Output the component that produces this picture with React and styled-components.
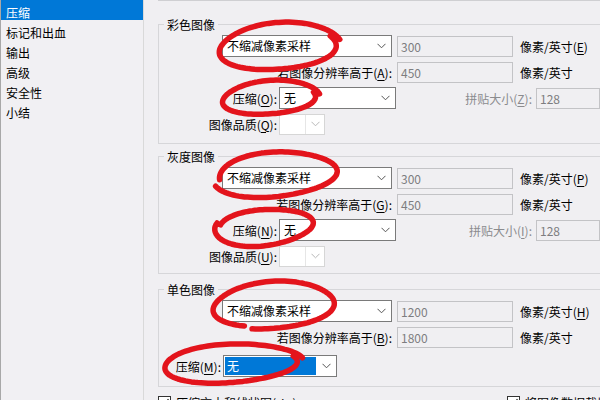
import React from 'react';
import styled, { createGlobalStyle } from 'styled-components';

const Global = createGlobalStyle`
  html, body { margin: 0; padding: 0; }
  body {
    width: 600px; height: 400px; overflow: hidden;
    background: #f0eff2;
    font-family: "Noto Sans CJK SC", "Microsoft YaHei", sans-serif;
    font-size: 12px; color: #000;
  }
  u { text-decoration-thickness: 1px; text-underline-offset: 2px; }
`;

const Page = styled.div`
  position: relative;
  display: flex;
  width: 600px;
  height: 400px;
  overflow: hidden;
  background: #f0eff2;
`;

const Sidebar = styled.ul`
  list-style: none;
  margin: 0;
  padding: 0;
  width: 142px;
  flex: none;
  border-left: 1px solid #a8a8a8;
  border-right: 1px solid #d9d9d9;
  background: #f1f0f3;
`;

const NavItem = styled.li`
  box-sizing: border-box;
  height: 20px;
  padding: 4px 0 0 5px;
  line-height: 17px;
  white-space: nowrap;
  background: ${p => (p.$active ? '#0078d7' : 'transparent')};
  color: ${p => (p.$active ? '#fff' : '#000')};
`;

const Main = styled.div`
  flex: 1;
  display: flex;
  flex-direction: column;
  padding-left: 14px;
  min-width: 0;
`;

const Content = styled.div`
  display: flex;
  flex-direction: column;
  border-top: 1px solid #cfcfd2;
`;

const Group = styled.section`
  display: flex;
  flex-direction: column;
  margin-top: ${p => p.$mt}px;
  padding-bottom: ${p => p.$pb}px;
  border: 1px solid #d6d6d9;
  border-right: none;
`;

const Legend = styled.div`
  width: fit-content;
  height: 16px;
  line-height: 16px;
  margin: -8px 0 2px 5px;
  padding: 0 3px;
  background: #f0eff2;
  white-space: nowrap;
`;

const Rows = styled.div`
  display: flex;
  flex-direction: column;
  gap: 4px;
`;

const Row = styled.div`
  display: flex;
  align-items: center;
  height: 22px;
  margin-top: ${p => p.$mt || 0}px;
`;

const Label = styled.span`
  flex: none;
  width: ${p => p.$w}px;
  margin-right: ${p => p.$mr || 0}px;
  text-align: right;
  white-space: nowrap;
  color: ${p => (p.$muted ? '#8b8b8e' : '#000')};
`;

const Unit = styled.span`
  flex: none;
  margin-left: 7px;
  white-space: nowrap;
`;

const ComboBox = styled.div`
  box-sizing: border-box;
  flex: none;
  width: ${p => p.$w}px;
  height: 22px;
  display: flex;
  align-items: center;
  background: #fff;
  border: 1px solid #7a7a7a;
  padding: 0 5px 0 ${p => (p.$selected ? 1 : 4)}px;
  margin-right: ${p => p.$mr || 0}px;
`;

const ComboText = styled.span`
  flex: 1;
  white-space: nowrap;
  overflow: hidden;
  line-height: 16px;
`;

const ComboHighlight = styled.span`
  flex: 1;
  height: 18px;
  line-height: 18px;
  padding-left: 2px;
  background: #0078d7;
  color: #fff;
  margin-right: 6px;
`;

const DimCombo = styled.div`
  box-sizing: border-box;
  flex: none;
  width: ${p => p.$w}px;
  height: 21px;
  display: flex;
  background: #fff;
  border: 1px solid #d6d6d6;
`;

const DimPart = styled.span`
  flex: 1;
  border-right: 1px solid #e6e6e6;
`;

const DimArrow = styled.span`
  width: 18px;
  display: flex;
  align-items: center;
  justify-content: center;
`;

const Field = styled.div`
  box-sizing: border-box;
  flex: none;
  width: ${p => p.$w}px;
  height: 21px;
  display: flex;
  align-items: center;
  padding-left: 3px;
  border: 1px solid #c3c3c6;
  color: #7d7d80;
  background: #f0eff2;
`;

const CheckRow = styled.div`
  display: flex;
  align-items: center;
  margin-top: 7px;
`;

const CheckItem = styled.label`
  display: flex;
  align-items: center;
  gap: 5px;
  flex: none;
  width: ${p => p.$w ? `${p.$w}px` : 'auto'};
  white-space: nowrap;
`;

const Box = styled.span`
  box-sizing: border-box;
  width: 13px;
  height: 13px;
  border: 1px solid #333;
  background: #fff;
  display: flex;
  align-items: center;
  justify-content: center;
`;

const Overlay = styled.svg`
  position: absolute;
  left: 0;
  top: 0;
  pointer-events: none;
`;

const Chevron = ({ color = '#555' }) => (
  <svg width="9" height="6" viewBox="0 0 9 6" style={{ flex: 'none' }}>
    <path d="M0.5 0.8 L4.5 4.8 L8.5 0.8" fill="none" stroke={color} strokeWidth="1" />
  </svg>
);

const Check = () => (
  <svg width="11" height="11" viewBox="0 0 11 11">
    <path d="M1.5 5.5 L4.2 8.3 L9.5 2.2" fill="none" stroke="#222" strokeWidth="1.3" />
  </svg>
);

function loopPath({ cx, cy, rx, ry, rot = 0, start = 0, sweep = 370, s0 = 0.96, s1 = 1.06, wob = 0.03, phase = 0 }) {
  const n = 120;
  const r = (rot * Math.PI) / 180;
  const pts = [];
  for (let i = 0; i <= n; i++) {
    const t = i / n;
    const a = ((start + sweep * t) * Math.PI) / 180;
    const s = (s0 + (s1 - s0) * t) * (1 + wob * Math.sin(3 * a + phase));
    const x = rx * s * Math.cos(a);
    const y = ry * s * Math.sin(a);
    const X = cx + x * Math.cos(r) - y * Math.sin(r);
    const Y = cy + x * Math.sin(r) + y * Math.cos(r);
    pts.push(`${X.toFixed(1)} ${Y.toFixed(1)}`);
  }
  return 'M' + pts.join(' L');
}

const loops = [
  { cx: 279, cy: 47, rx: 59, ry: 23, rot: -4, start: -20, sweep: 372 },
  { cx: 270, cy: 98, rx: 47, ry: 16.5, rot: -4, start: -10, sweep: 368 },
  { cx: 275, cy: 174, rx: 57, ry: 21, rot: -4, start: 175, sweep: 345, s0: 1.0, s1: 1.12, phase: 1 },
  { cx: 264, cy: 227, rx: 48, ry: 18, rot: -5, start: 200, sweep: 365, phase: 2 },
  { cx: 272, cy: 305, rx: 58, ry: 22, rot: -4, start: 120, sweep: 350, s0: 1.0, s1: 1.1 },
  { cx: 231, cy: 364, rx: 67, ry: 19, rot: -3, start: -15, sweep: 368, phase: 1 },
];

const navItems = ['压缩', '标记和出血', '输出', '高级', '安全性', '小结'];

const groups = [
  { title: '彩色图像', mt: 23, pb: 8, m: ['E', 'A', 'O', 'Z', 'Q'], res: ['300', '450'], quality: true },
  { title: '灰度图像', mt: 12, pb: 6, m: ['P', 'G', 'N', 'I', 'U'], res: ['300', '450'], quality: true },
  { title: '单色图像', mt: 15, pb: 9, m: ['H', 'B', 'M'], res: ['1200', '1800'], quality: false },
];

function ImageGroup({ g }) {
  return (
    <Group $mt={g.mt} $pb={g.pb}>
      <Legend>{g.title}</Legend>
      <Rows>
        <Row>
          <Label $w={63} />
          <ComboBox $w={170} $mr={5}>
            <ComboText>不缩减像素采样</ComboText>
            <Chevron />
          </ComboBox>
          <Field $w={116}>{g.res[0]}</Field>
          <Unit>像素/英寸(<u>{g.m[0]}</u>)</Unit>
        </Row>
        <Row>
          <Label $w={233} $mr={5}>若图像分辨率高于(<u>{g.m[1]}</u>):</Label>
          <Field $w={116}>{g.res[1]}</Field>
          <Unit>像素/英寸</Unit>
        </Row>
        {g.quality ? (
          <>
            <Row>
              <Label $w={118} $mr={2}>压缩(<u>{g.m[2]}</u>):</Label>
              <ComboBox $w={117}>
                <ComboText>无</ComboText>
                <Chevron />
              </ComboBox>
              <Label $w={136} $mr={4} $muted>拼贴大小(<u>{g.m[3]}</u>):</Label>
              <Field $w={64}>128</Field>
            </Row>
            <Row>
              <Label $w={118} $mr={2}>图像品质(<u>{g.m[4]}</u>):</Label>
              <DimCombo $w={46}>
                <DimPart />
                <DimArrow><Chevron color="#b8b8b8" /></DimArrow>
              </DimCombo>
            </Row>
          </>
        ) : (
          <Row $mt={3}>
            <Label $w={62} $mr={2}>压缩(<u>{g.m[2]}</u>):</Label>
            <ComboBox $w={114} $selected>
              <ComboHighlight>无</ComboHighlight>
              <Chevron />
            </ComboBox>
          </Row>
        )}
      </Rows>
    </Group>
  );
}

export default function App() {
  return (
    <>
      <Global />
      <Page>
        <Sidebar>
          {navItems.map((t, i) => (
            <NavItem key={t} $active={i === 0}>{t}</NavItem>
          ))}
        </Sidebar>
        <Main>
          <Content>
            {groups.map(g => (
              <ImageGroup key={g.title} g={g} />
            ))}
            <CheckRow>
              <CheckItem $w={349}>
                <Box><Check /></Box>
                压缩文本和线状图(<u>L</u>)
              </CheckItem>
              <CheckItem>
                <Box><Check /></Box>
                将图像数据裁切到框架(<u>F</u>)
              </CheckItem>
            </CheckRow>
          </Content>
        </Main>
        <Overlay width="600" height="400" viewBox="0 0 600 400">
          {loops.map((l, i) => (
            <path
              key={i}
              d={loopPath(l)}
              fill="none"
              stroke="#e3141c"
              strokeWidth="5.5"
              strokeLinecap="round"
              strokeLinejoin="round"
            />
          ))}
        </Overlay>
      </Page>
    </>
  );
}
